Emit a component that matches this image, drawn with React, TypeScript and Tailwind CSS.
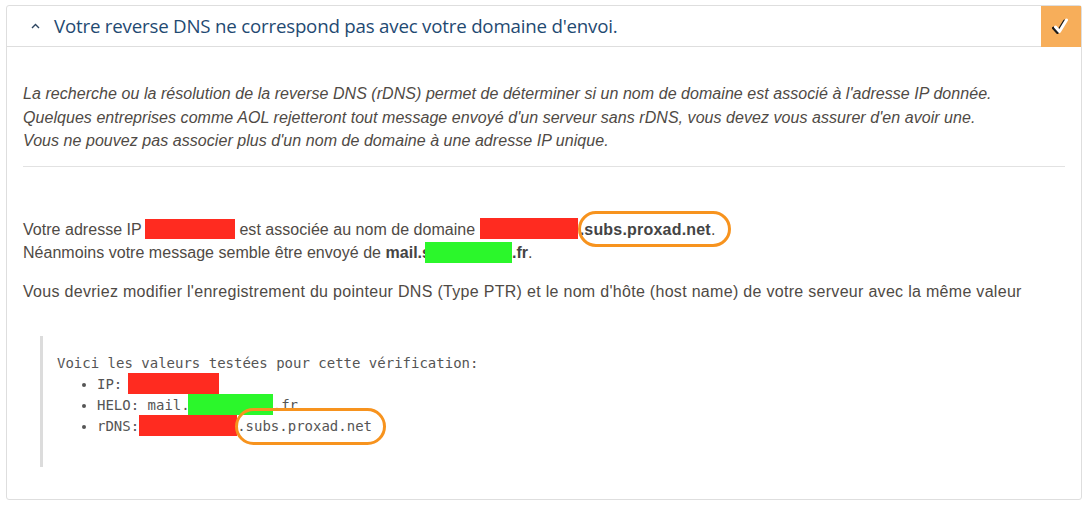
import React from 'react';

const sans = { fontFamily: '"Liberation Sans", Arial, sans-serif' };

// Redacted values in the screenshot
function Red({ w, className = '' }: { w: string; className?: string }) {
  return <span className={`inline-block align-middle bg-[#ff2b20] ${w} ${className}`} />;
}

function Circled({ children, className }: { children: React.ReactNode; className: string }) {
  return (
    <span className="relative">
      {children}
      <span className={`pointer-events-none absolute rounded-full border-[3px] border-[#f7931e] ${className}`} />
    </span>
  );
}

export default function App() {
  return (
    <div className="min-h-screen bg-white pt-[5px] pl-[6px] pr-[6px]">
      <div className="w-[1076px] rounded-[3px] border border-[#dedede] bg-white">
        {/* Header */}
        <div className="flex h-[41px] items-center border-b border-[#dedede]">
          <div className="flex flex-1 items-center pl-[24px]">
            <svg width="9" height="6" viewBox="0 0 9 6" className="mt-[1px]">
              <path d="M1 5 L4.5 1.5 L8 5" fill="none" stroke="#2d4560" strokeWidth="1.4" />
            </svg>
            <span
              className="ml-[14px] text-[18.7px] tracking-[-0.2px] text-[#1f4a72]"
              style={{ fontFamily: '"Open Sans", sans-serif' }}
            >
              Votre reverse DNS ne correspond pas avec votre domaine d'envoi.
            </span>
          </div>
          <div className="flex h-[41px] w-[40px] items-center justify-center bg-[#f7ae5a]">
            <svg width="18" height="18" viewBox="0 0 18 18" style={{ filter: 'drop-shadow(-1.5px 1px 0 #1a1a1a)' }}>
              <path d="M3.5 10 L7.5 14.5 L14.5 3" fill="none" stroke="#fff" strokeWidth="3" strokeLinecap="round" strokeLinejoin="round" />
            </svg>
          </div>
        </div>

        {/* Body */}
        <div className="px-[16px] pt-[35px] pb-[32px] text-[16px] text-[#4f4a45]" style={sans}>
          <p className="italic leading-[23.5px] tracking-[0.05px]">
            La recherche ou la résolution de la reverse DNS (rDNS) permet de déterminer si un nom de domaine est associé à l'adresse IP donnée.
            <br />
            Quelques entreprises comme AOL rejetteront tout message envoyé d'un serveur sans rDNS, vous devez vous assurer d'en avoir une.
            <br />
            Vous ne pouvez pas associer plus d'un nom de domaine à une adresse IP unique.
          </p>
          <hr className="mt-[13px] border-[#e2e2e2]" />

          <p className="mt-[51px] leading-[23.5px] tracking-[0.03px]">
            Votre adresse IP <Red w="w-[90px] h-[20px] -mt-[2px] -ml-[1px]" /> est associée au nom de domaine{' '}
            <Red w="w-[98px] h-[21px] -mt-[3px]" />
            <Circled className="left-0 -right-[16px] -top-[10px] -bottom-[9px]">
              <b className="ml-[2px] font-bold text-[#444] tracking-[0.2px]">.subs.proxad.net</b>.
            </Circled>
            <br />
            Néanmoins votre message semble être envoyé de <b className="font-bold text-[#444]">mail.s</b>
            <span className="-ml-[6px] inline-block h-[21px] w-[87px] align-middle -mt-[3px] bg-[#2bf72b]" />
            <b className="font-bold text-[#444]">.fr</b>.
          </p>
          <p className="mt-[15px] leading-[23px] tracking-[0.3px]">
            Vous devriez modifier l'enregistrement du pointeur DNS (Type PTR) et le nom d'hôte (host name) de votre serveur avec la même valeur
          </p>

          <div
            className="mt-[33px] ml-[17px] border-l-[3px] border-[#dcdcdc] pl-[14px] pt-[17px] pb-[30px] text-[14px] leading-[21.2px] text-[#555]"
            style={{ fontFamily: '"DejaVu Sans Mono", Menlo, monospace' }}
          >
            <div>Voici les valeurs testées pour cette vérification:</div>
            <ul className="list-disc pl-[40px]">
              <li>
                IP: <Red w="w-[91px] h-[21px] -mt-[3px] -ml-[3px]" />
              </li>
              <li>
                HELO: mail.
                <span className="inline-block h-[21px] w-[85px] align-middle -mt-[3px] -ml-[2px] bg-[#2bf72b]" />
                .fr
              </li>
              <li>
                rDNS:
                <Red w="w-[98px] h-[21px] -mt-[3px]" />
                <Circled className="-left-[2px] -right-[14px] -top-[10px] -bottom-[11px]">.subs.proxad.net</Circled>
              </li>
            </ul>
          </div>
        </div>
      </div>
    </div>
  );
}
